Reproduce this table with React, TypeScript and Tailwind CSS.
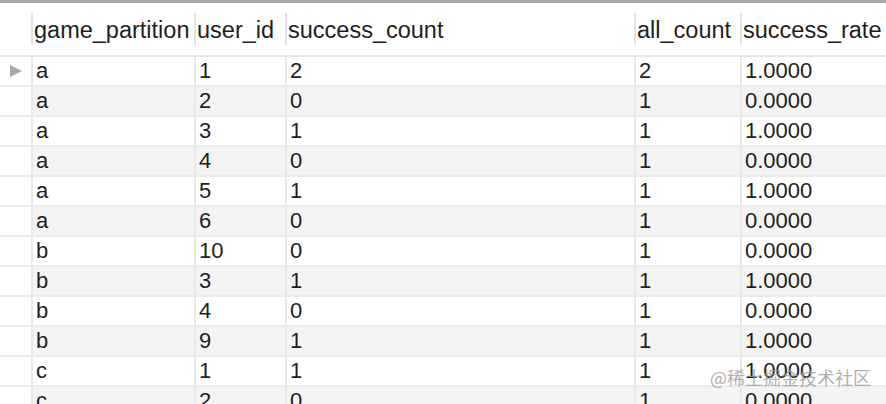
import React from "react";

const rows: string[][] = [
  ["a", "1", "2", "2", "1.0000"],
  ["a", "2", "0", "1", "0.0000"],
  ["a", "3", "1", "1", "1.0000"],
  ["a", "4", "0", "1", "0.0000"],
  ["a", "5", "1", "1", "1.0000"],
  ["a", "6", "0", "1", "0.0000"],
  ["b", "10", "0", "1", "0.0000"],
  ["b", "3", "1", "1", "1.0000"],
  ["b", "4", "0", "1", "0.0000"],
  ["b", "9", "1", "1", "1.0000"],
  ["c", "1", "1", "1", "1.0000"],
  ["c", "2", "0", "1", "0.0000"],
];

const headers = ["game_partition", "user_id", "success_count", "all_count", "success_rate"];
const widths = ["w-[163px]", "w-[91px]", "w-[349px]", "w-[106px]", "w-[146px]"];

export default function App() {
  return (
    <div className="relative w-[886px] h-[404px] overflow-hidden bg-white text-[#1e1e1e] text-[22px] leading-none font-['Liberation_Sans',Arial,sans-serif]">
      <div className="h-[3px] bg-[#a8a8a8]" />
      {/* header */}
      <div className="flex h-[54px] items-center border-b-2 border-[#e6e6e6]">
        <div className="w-[31px] shrink-0" />
        {headers.map((h, i) => (
          <div key={h} className={`${widths[i]} shrink-0 flex items-center h-full`}>
            <div className="w-[2px] h-[32px] bg-[#e2e2e2] shrink-0" />
            <span className="pl-[1px] pt-[4px] whitespace-nowrap text-[23.5px]">{h}</span>
          </div>
        ))}
      </div>
      {/* body */}
      {rows.map((r, ri) => (
        <div key={ri} className="flex h-[30px] border-b-2 border-[#ebebeb]">
          <div className="w-[31px] shrink-0 flex items-center justify-center bg-white">
            {ri === 0 && (
              <svg width="14" height="14" viewBox="0 0 14 14">
                <polygon points="1,1 13,7 1,13" fill="#a6a6a6" />
              </svg>
            )}
          </div>
          <div className={`flex flex-1 ${ri % 2 === 1 ? "bg-[#f4f4f4]" : "bg-white"}`}>
            {r.map((c, ci) => (
              <div key={ci} className={`${widths[ci]} shrink-0 flex items-center`}>
                <div className="w-[2px] h-full bg-[#e8e8e8] shrink-0" />
                <span className="pl-[3px]">{c}</span>
              </div>
            ))}
          </div>
        </div>
      ))}
      <div className="absolute left-[710px] top-[368px] text-[18px] leading-none text-[#9a9a9a]/80 font-['Noto_Sans_CJK_SC',sans-serif] whitespace-nowrap">
        @稀土掘金技术社区
      </div>
    </div>
  );
}
